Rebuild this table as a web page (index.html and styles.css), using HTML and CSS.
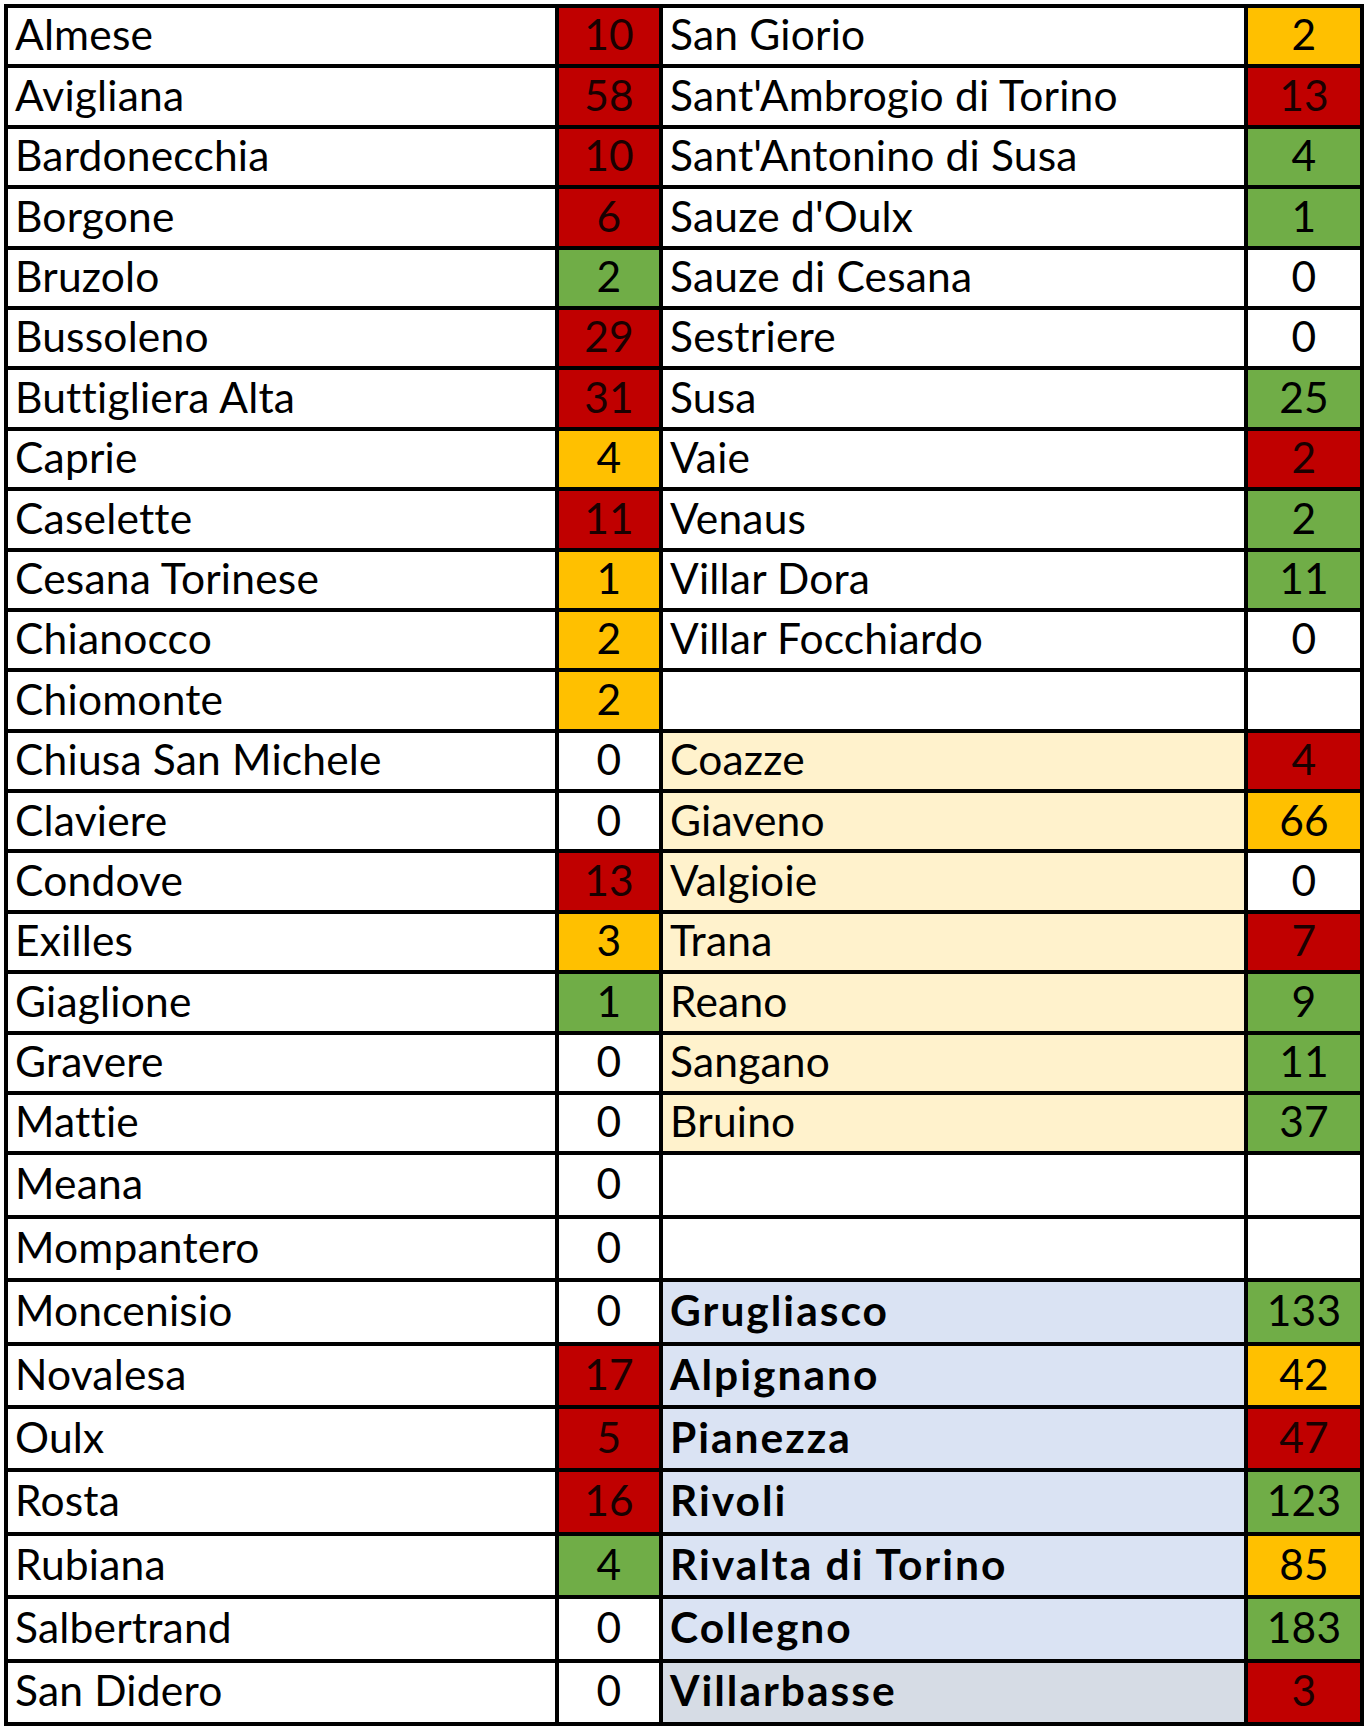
FILE: index.html
```html
<!DOCTYPE html>
<html lang="it">
<head>
<meta charset="utf-8">
<title>Comuni</title>
<link rel="stylesheet" href="styles.css">
</head>
<body>
<div class="sheet">
  <div class="n">Almese</div><div class="v r">10</div><div class="n">San Giorio</div><div class="v a">2</div>
  <div class="n">Avigliana</div><div class="v r">58</div><div class="n">Sant'Ambrogio di Torino</div><div class="v r">13</div>
  <div class="n">Bardonecchia</div><div class="v r">10</div><div class="n">Sant'Antonino di Susa</div><div class="v g">4</div>
  <div class="n">Borgone</div><div class="v r">6</div><div class="n">Sauze d'Oulx</div><div class="v g">1</div>
  <div class="n">Bruzolo</div><div class="v g">2</div><div class="n">Sauze di Cesana</div><div class="v">0</div>
  <div class="n">Bussoleno</div><div class="v r">29</div><div class="n">Sestriere</div><div class="v">0</div>
  <div class="n">Buttigliera Alta</div><div class="v r">31</div><div class="n">Susa</div><div class="v g">25</div>
  <div class="n">Caprie</div><div class="v a">4</div><div class="n">Vaie</div><div class="v r">2</div>
  <div class="n">Caselette</div><div class="v r">11</div><div class="n">Venaus</div><div class="v g">2</div>
  <div class="n">Cesana Torinese</div><div class="v a">1</div><div class="n">Villar Dora</div><div class="v g">11</div>
  <div class="n">Chianocco</div><div class="v a">2</div><div class="n">Villar Focchiardo</div><div class="v">0</div>
  <div class="n">Chiomonte</div><div class="v a">2</div><div class="n"></div><div class="v"></div>
  <div class="n">Chiusa San Michele</div><div class="v">0</div><div class="n y">Coazze</div><div class="v r">4</div>
  <div class="n">Claviere</div><div class="v">0</div><div class="n y">Giaveno</div><div class="v a">66</div>
  <div class="n">Condove</div><div class="v r">13</div><div class="n y">Valgioie</div><div class="v">0</div>
  <div class="n">Exilles</div><div class="v a">3</div><div class="n y">Trana</div><div class="v r">7</div>
  <div class="n">Giaglione</div><div class="v g">1</div><div class="n y">Reano</div><div class="v g">9</div>
  <div class="n">Gravere</div><div class="v">0</div><div class="n y">Sangano</div><div class="v g">11</div>
  <div class="n">Mattie</div><div class="v">0</div><div class="n y">Bruino</div><div class="v g">37</div>
  <div class="n">Meana</div><div class="v">0</div><div class="n"></div><div class="v"></div>
  <div class="n">Mompantero</div><div class="v">0</div><div class="n"></div><div class="v"></div>
  <div class="n">Moncenisio</div><div class="v">0</div><div class="n b">Grugliasco</div><div class="v g">133</div>
  <div class="n">Novalesa</div><div class="v r">17</div><div class="n b">Alpignano</div><div class="v a">42</div>
  <div class="n">Oulx</div><div class="v r">5</div><div class="n b">Pianezza</div><div class="v r">47</div>
  <div class="n">Rosta</div><div class="v r">16</div><div class="n b">Rivoli</div><div class="v g">123</div>
  <div class="n">Rubiana</div><div class="v g">4</div><div class="n b">Rivalta di Torino</div><div class="v a">85</div>
  <div class="n">Salbertrand</div><div class="v">0</div><div class="n b">Collegno</div><div class="v g">183</div>
  <div class="n">San Didero</div><div class="v">0</div><div class="n b s">Villarbasse</div><div class="v r">3</div>
</div>
</body>
</html>
```

FILE: styles.css
```css
html, body {
  margin: 0;
  padding: 0;
  background: #ffffff;
}

body {
  padding: 4px 0 0 4px;
  font-family: "Lato", "Liberation Sans", sans-serif;
  color: #000;
}

.sheet {
  display: inline-grid;
  grid-template-columns: 547px 100px 581px 112px;
  grid-template-rows: repeat(19, 56.4px) repeat(9, 59.4px);
  gap: 4px;
  padding: 4px;
  background: #000;
  font-size: 42.5px;
  line-height: 1;
  font-variant-ligatures: none;
  letter-spacing: 0.2px;
}

.sheet > div {
  background: #ffffff;
  display: flex;
  align-items: center;
  white-space: nowrap;
  overflow: hidden;
  padding-bottom: 3px;
  box-sizing: border-box;
}

.n {
  padding-left: 7px;
}

.v {
  justify-content: center;
}

.r { background: #c00000 !important; color: #1a0000; }
.a { background: #ffc000 !important; }
.g { background: #70ad47 !important; }
.y { background: #fff2cc !important; }
.b { background: #dae3f3 !important; font-weight: 700; letter-spacing: 2px; }
.s { background: #d6dce5 !important; }
```
